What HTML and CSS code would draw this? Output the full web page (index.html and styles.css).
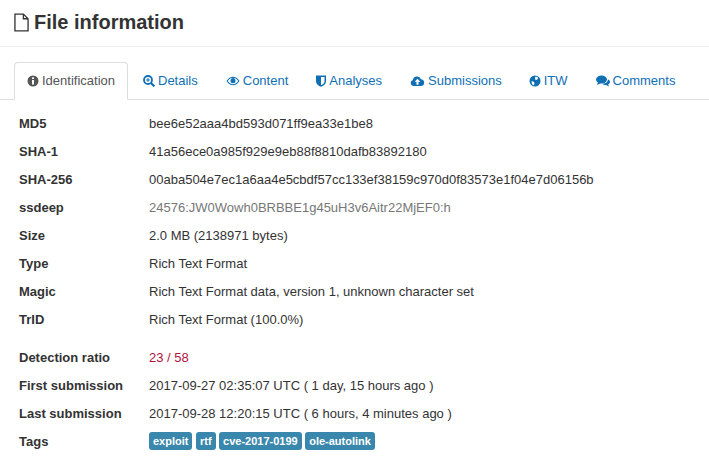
FILE: index.html
```html
<!DOCTYPE html>
<html lang="en">
<head>
    <meta charset="UTF-8">
    <title>File information</title>
    <link rel="stylesheet" href="styles.css">
</head>
<body>
    <h1 class="page-title">
        <svg class="title-icon" viewBox="0 0 16 20" width="15" height="19"><path d="M1 1h9l5 5v13H1z M10 1v5h5" fill="none" stroke="#333" stroke-width="1.4"/></svg>
        File information
    </h1>

    <ul class="tabs">
        <li class="tab active">
            <svg class="icon" viewBox="0 0 12 12"><circle cx="6" cy="6" r="5.500" fill="currentColor"/><rect x="5" y="5" width="2" height="4.500" fill="#fff"/><rect x="5" y="2.400" width="2" height="1.600" fill="#fff"/></svg>
            Identification
        </li>
        <li class="tab">
            <svg class="icon" viewBox="0 0 12 12"><circle cx="5" cy="5" r="4" fill="none" stroke="currentColor" stroke-width="1.800"/><path d="M8 8l3.400 3.400" stroke="currentColor" stroke-width="2.200"/><path d="M3 5h4M5 3v4" stroke="currentColor"/></svg>
            Details
        </li>
        <li class="tab">
            <svg class="icon icon-eye" viewBox="0 0 14 10"><path d="M0.500 5C3 1.500 5 .8 7 .8S11 1.500 13.500 5C11 8.500 9 9.200 7 9.200S3 8.500.5 5z" fill="currentColor"/><path d="M1.800 5C3.500 2.800 4.800 2 5 2a3.400 3.400 0 0 0 4 0c.2 0 1.500.8 3.200 3C10.500 7.400 8.800 8.200 7 8.200S3.500 7.400 1.800 5z" fill="#fff"/><circle cx="7" cy="4.800" r="2.500" fill="currentColor"/></svg>
            Content
        </li>
        <li class="tab">
            <svg class="icon icon-shield" viewBox="0 0 10 12"><path d="M0 .5h10v6C10 9 7.500 10.800 5 11.800 2.500 10.800 0 9 0 6.500z" fill="currentColor"/><path d="M5 2h3.500v4.400C8.500 8 6.800 9.400 5 10.200z" fill="#fff"/></svg>
            Analyses
        </li>
        <li class="tab tab-tight">
            <svg class="icon icon-cloud" viewBox="0 0 15 11"><path d="M3.500 10.500a3 3 0 0 1-.6-5.900A4.200 4.200 0 0 1 11 3.800a3.400 3.400 0 0 1 .5 6.700z" fill="currentColor"/><path d="M7.500 3.300L4.600 6.300h1.900v2.900h2V6.300h1.900z" fill="#fff"/></svg>
            Submissions
        </li>
        <li class="tab">
            <svg class="icon" viewBox="0 0 12 12"><circle cx="6" cy="6" r="5.500" fill="currentColor"/><path d="M6.500 1.500L9 2.500 8.500 4.500 6.500 5 6 3.500zM2.500 6L5 7l.5 2-1 1.500L3 9z" fill="#fff"/></svg>
            ITW
        </li>
        <li class="tab">
            <svg class="icon icon-bubble" viewBox="0 0 14 12"><ellipse cx="5.500" cy="4.500" rx="5.500" ry="4" fill="currentColor"/><path d="M2 7L1 10l4-2z" fill="currentColor"/><path d="M12 4.200c1.500.8 2 1.800 2 2.800 0 1.200-.8 2-1.800 2.600l.8 2-3-1.600c-1.800 0-3-.2-4-1.200 3 0 6-1.500 6-4.600z" fill="currentColor"/></svg>
            Comments
        </li>
    </ul>

    <div class="file-info">
        <div class="info-row"><div class="info-label">MD5</div><div>bee6e52aaa4bd593d071ff9ea33e1be8</div></div>
        <div class="info-row"><div class="info-label">SHA-1</div><div>41a56ece0a985f929e9eb88f8810dafb83892180</div></div>
        <div class="info-row"><div class="info-label">SHA-256</div><div>00aba504e7ec1a6aa4e5cbdf57cc133ef38159c970d0f83573e1f04e7d06156b</div></div>
        <div class="info-row"><div class="info-label">ssdeep</div><div class="muted">24576:JW0Wowh0BRBBE1g45uH3v6Aitr22MjEF0:h</div></div>
        <div class="info-row"><div class="info-label">Size</div><div>2.0 MB (2138971 bytes)</div></div>
        <div class="info-row"><div class="info-label">Type</div><div>Rich Text Format</div></div>
        <div class="info-row"><div class="info-label">Magic</div><div>Rich Text Format data, version 1, unknown character set</div></div>
        <div class="info-row"><div class="info-label">TrID</div><div>Rich Text Format (100.0%)</div></div>

        <div class="info-row spaced"><div class="info-label">Detection ratio</div><div class="ratio">23 / 58</div></div>
        <div class="info-row"><div class="info-label">First submission</div><div>2017-09-27 02:35:07 UTC ( 1 day, 15 hours ago )</div></div>
        <div class="info-row"><div class="info-label">Last submission</div><div>2017-09-28 12:20:15 UTC ( 6 hours, 4 minutes ago )</div></div>
        <div class="info-row">
            <div class="info-label">Tags</div>
            <div class="tags">
                <span class="tag">exploit</span>
                <span class="tag">rtf</span>
                <span class="tag">cve-2017-0199</span>
                <span class="tag">ole-autolink</span>
            </div>
        </div>
    </div>
</body>
</html>
```
FILE: styles.css
```css
body {
    font-family: "Liberation Sans", Arial, sans-serif;
    font-size: 13px;
    color: #333;
    background-color: #fff;
    margin: 0;
    overflow: hidden;
}

.page-title {
    display: flex;
    align-items: center;
    gap: 5px;
    height: 44px;
    margin: 0;
    padding: 0 0 2px 14px;
    font-size: 20px;
    font-weight: bold;
    border-bottom: 1px solid #eee;
}

.tabs {
    display: flex;
    list-style: none;
    margin: 15px 0 0;
    padding: 0 0 0 14px;
    border-bottom: 1px solid #ddd;
    height: 37px;
}

.tab {
    display: flex;
    align-items: center;
    gap: 3px;
    padding: 0 14px;
    height: 37px;
    box-sizing: border-box;
    color: #0f6fb5;
}

.tab-tight {
    padding-right: 13px;
}

.tab.active {
    color: #555;
    background-color: #fff;
    border: 1px solid #ddd;
    border-bottom-color: #fff;
    border-radius: 4px 4px 0 0;
    height: 38px;
    padding: 0 12px 1px;
    margin-right: 1px;
}

.icon {
    width: 12px;
    height: 12px;
}

.icon-eye {
    width: 14px;
}

.icon-shield {
    width: 10px;
}

.icon-cloud {
    width: 15px;
}

.icon-bubble {
    width: 14px;
}

.file-info {
    padding: 9px 0 0 19px;
}

.info-row {
    display: flex;
    align-items: center;
    height: 28px;
}

.info-row.spaced {
    margin-top: 10px;
}

.info-label {
    width: 130px;
    font-weight: bold;
}

.muted {
    color: #777;
}

.ratio {
    color: #b2123c;
}

.tags {
    display: flex;
    gap: 3.5px;
}

.tag {
    padding: 3px 4px;
    border-radius: 3px;
    background-color: #3a87ad;
    color: #fff;
    font-size: 11px;
    font-weight: bold;
}
```
